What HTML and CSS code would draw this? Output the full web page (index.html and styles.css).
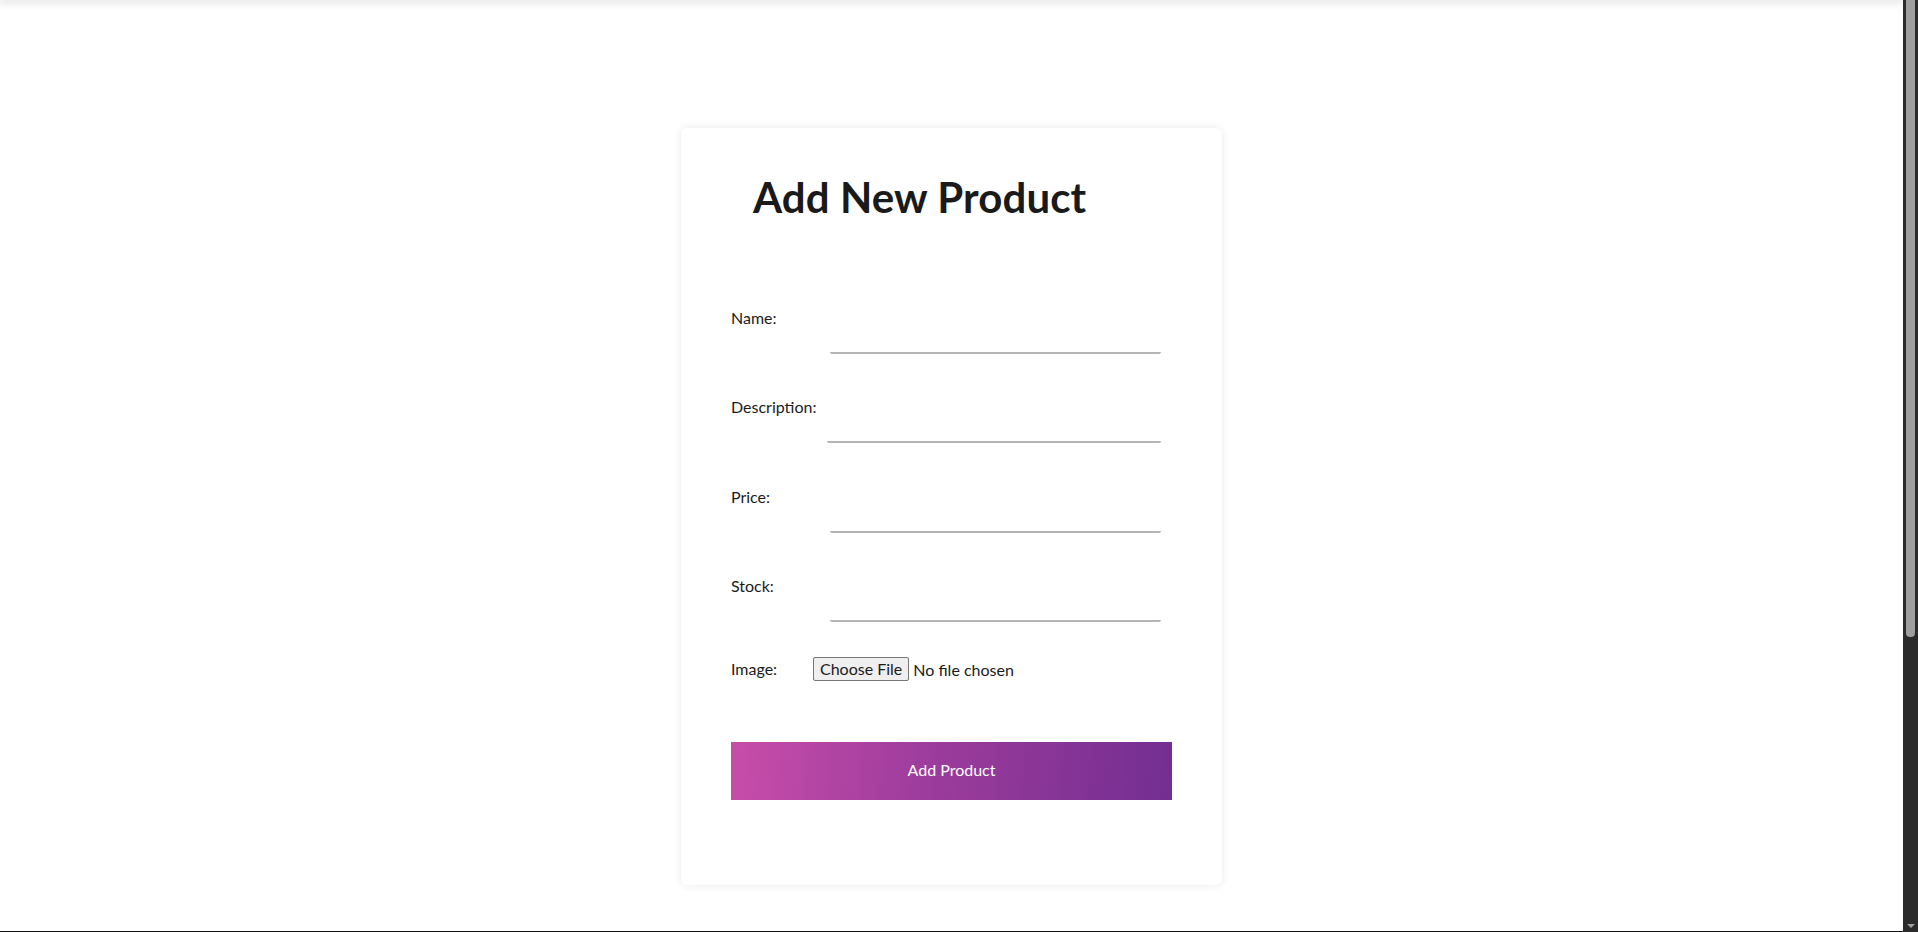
FILE: index.html
```html
<!DOCTYPE html>
<html lang="en">
<head>
<meta charset="utf-8">
<title>Add New Product</title>
<link rel="stylesheet" href="styles.css">
</head>
<body>
<header class="topbar"></header>
<main class="page">
  <section class="card">
    <h1 class="card-title">Add New Product</h1>
    <form class="product-form">
      <div class="field">
        <label class="field-label" for="name">Name:</label>
        <input class="field-input" id="name" type="text">
      </div>
      <div class="field">
        <label class="field-label" for="description">Description:</label>
        <input class="field-input field-input-wide" id="description" type="text">
      </div>
      <div class="field">
        <label class="field-label" for="price">Price:</label>
        <input class="field-input" id="price" type="number">
      </div>
      <div class="field">
        <label class="field-label" for="stock">Stock:</label>
        <input class="field-input" id="stock" type="number">
      </div>
      <div class="field field-file">
        <label class="field-label field-label-short" for="image">Image:</label>
        <input class="file-input" id="image" type="file">
      </div>
      <button class="submit-btn" type="button">Add Product</button>
    </form>
  </section>
</main>
<footer class="footer"></footer>
<div class="scrollbar" aria-hidden="true">
  <div class="scrollbar-thumb"></div>
  <div class="scrollbar-arrow"></div>
</div>
</body>
</html>
```

FILE: styles.css
```css
html {
  background: #ffffff;
}

body {
  margin: 0;
  background: #ffffff;
  color: #1b1b1b;
  font-family: Lato, "Noto Sans", sans-serif;
}

.topbar {
  height: 0;
  margin-right: 15px;
  box-shadow: 0 0 9px 2px rgba(0, 0, 0, 0.18);
}

.page {
  display: flex;
  justify-content: center;
  padding: 128px 15px 46px 0;
}

.card {
  width: 541px;
  box-sizing: border-box;
  padding: 44px 50px 85px;
  background: #ffffff;
  border-radius: 6px;
  box-shadow: 0 0 10px rgba(0, 0, 0, 0.09);
}

.card-title {
  margin: 0 0 85.5px;
  padding-left: 22px;
  font-size: 42px;
  font-weight: 700;
  line-height: normal;
  color: #1a1a1a;
  letter-spacing: 0.1px;
}

.product-form {
  display: flex;
  flex-direction: column;
}

.field {
  display: flex;
  align-items: flex-start;
  margin-bottom: 43.5px;
}

.field-label {
  flex: none;
  min-width: 96px;
  font-size: 16px;
  line-height: 20px;
  color: #1b1b1b;
}

.field-input {
  flex: none;
  width: 331px;
  height: 46px;
  box-sizing: border-box;
  margin: 0 11px 0 auto;
  padding: 0 4px;
  border: none;
  border-bottom: 2px solid #b5b5b5;
  border-radius: 2px;
  background: transparent;
  font: inherit;
  outline: none;
}

.field-input-wide {
  width: 334px;
}

.field-file {
  margin-top: -7px;
  margin-bottom: 61.5px;
}

.field-label-short {
  min-width: 82px;
}

.file-input {
  font-family: Lato, "Noto Sans", sans-serif;
  font-size: 16px;
  color: #1b1b1b;
  height: 24px;
  margin-top: -2px;
}

.file-input::file-selector-button {
  font: inherit;
  height: 24px;
  padding: 0 6px;
  margin-right: 4px;
  color: #1b1b1b;
  background: #efefef;
  border: 1px solid #767676;
  border-radius: 2px;
}

.submit-btn {
  height: 58px;
  padding: 0 0 3px;
  border: none;
  background: linear-gradient(95deg, #c84daa 0%, #9c3c9c 45%, #732e91 100%);
  color: #ffffff;
  font-family: Lato, "Noto Sans", sans-serif;
  font-size: 16px;
  cursor: pointer;
}

.footer {
  height: 432px;
  background: #111111;
}

.scrollbar {
  position: fixed;
  top: 0;
  right: 0;
  width: 15px;
  height: 100vh;
  display: flex;
  flex-direction: column;
  align-items: center;
  background: #2b2b2b;
}

.scrollbar-thumb {
  width: 9px;
  height: 637px;
  background: #9f9f9f;
  border-radius: 0 0 4px 4px;
}

.scrollbar-arrow {
  margin-top: auto;
  margin-bottom: 4px;
  width: 0;
  height: 0;
  border-left: 4px solid transparent;
  border-right: 4px solid transparent;
  border-top: 4px solid #9f9f9f;
}
```
